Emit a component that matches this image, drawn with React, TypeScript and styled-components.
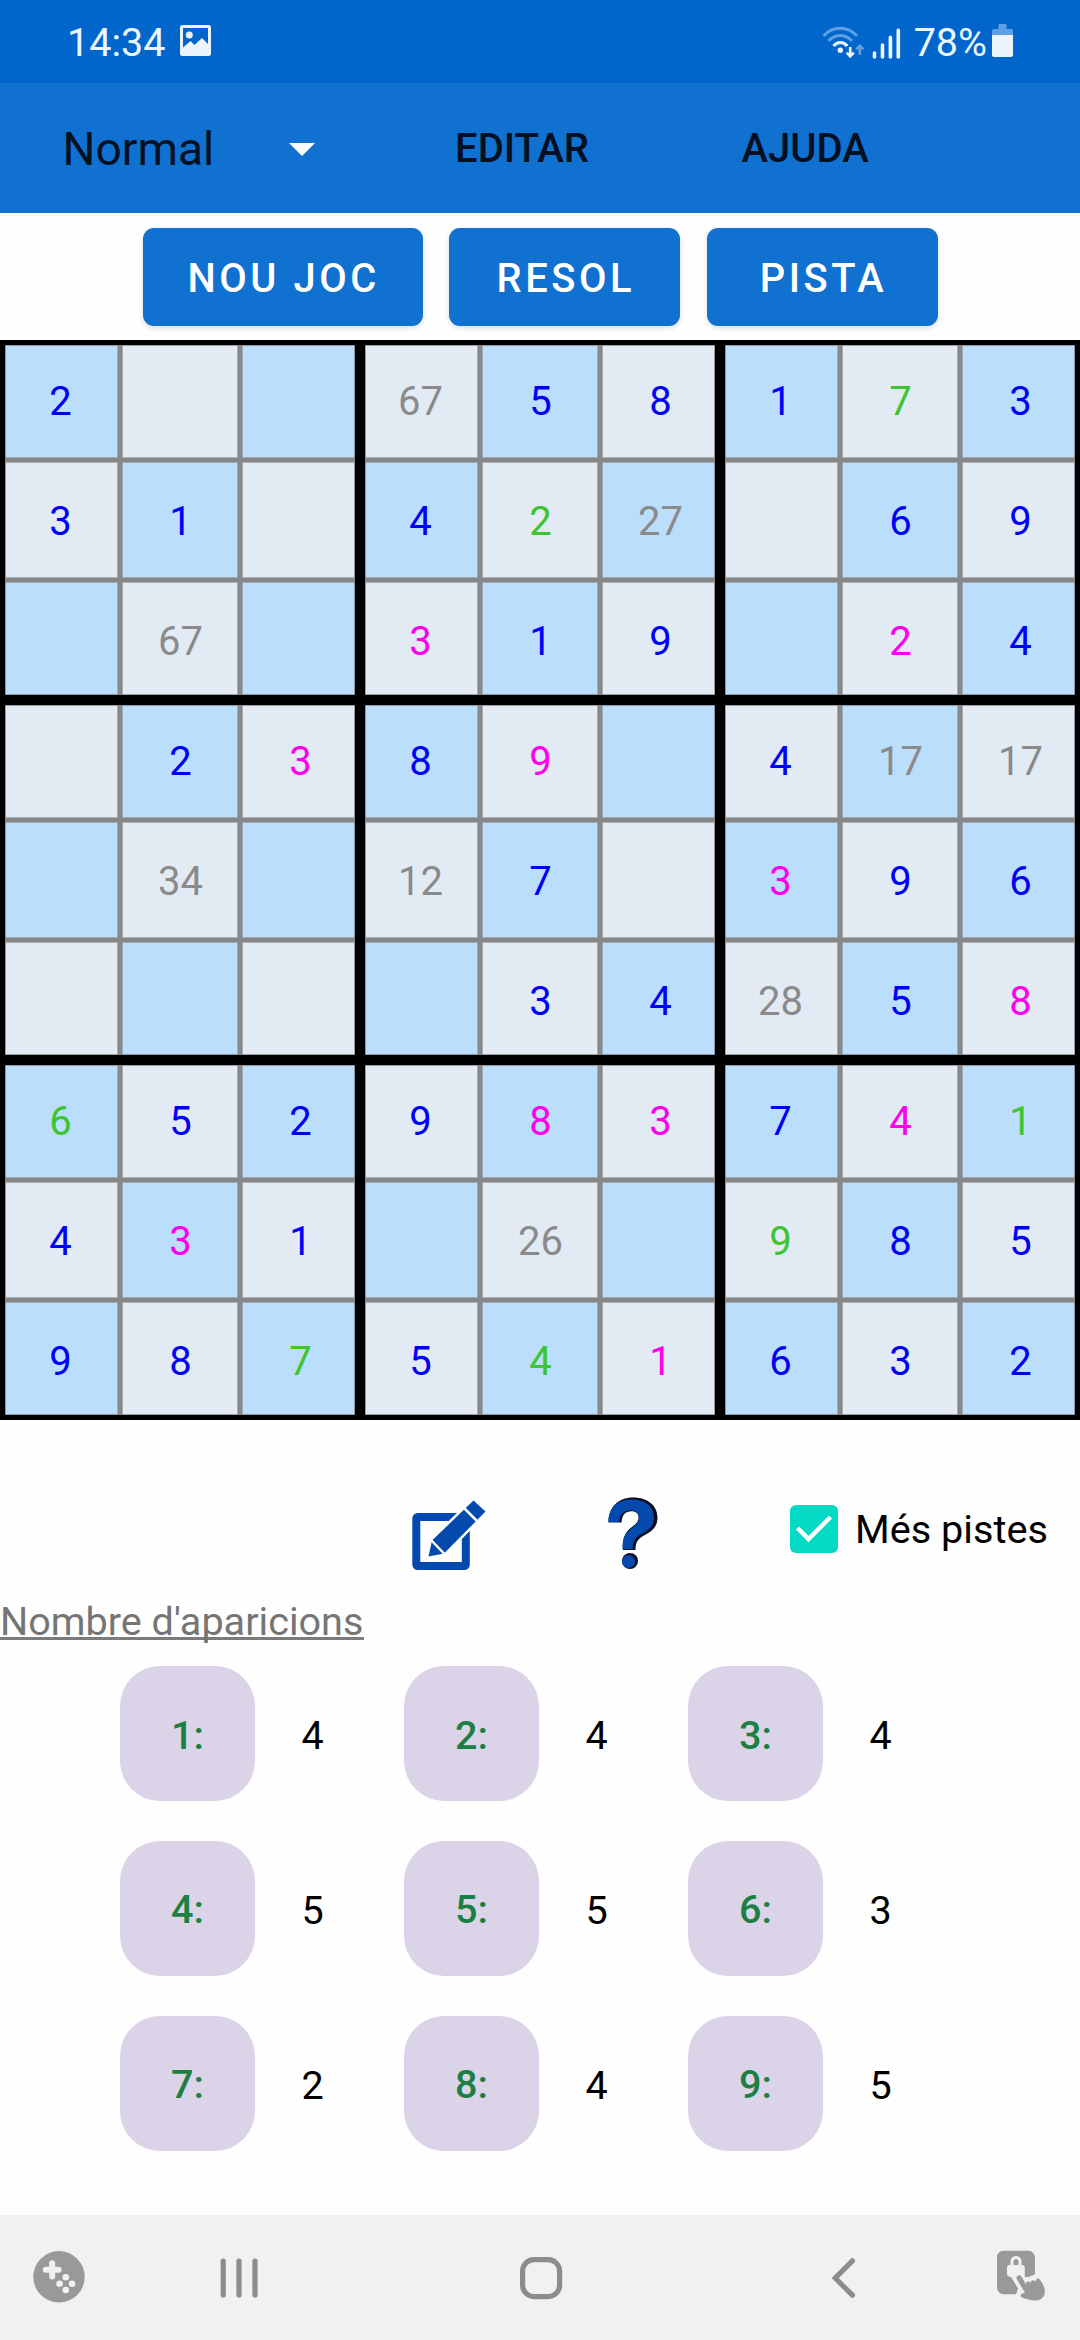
import React from 'react';
import styled, { createGlobalStyle } from 'styled-components';

const GlobalStyle = createGlobalStyle`
  * { box-sizing: border-box; }
  body { margin: 0; background: #fefefe; font-family: Roboto, "Noto Sans", sans-serif; }
  button { font-family: inherit; border: 0; padding: 0; background: none; }
`;

const Screen = styled.div`
  width: 1080px;
  height: 2340px;
  display: flex;
  flex-direction: column;
  background: #fefefe;
  font-size: 39.5px;
  line-height: 46px;
  overflow: hidden;
`;

const StatusBar = styled.header`
  height: 83px;
  padding: 2px 67px 0 67px;
  display: flex;
  justify-content: space-between;
  align-items: center;
  background: #0066cc;
  color: #ecf6ff;
`;

const StatusGroup = styled.div`
  display: flex;
  align-items: center;
`;

const StatusText = styled.span`
  white-space: nowrap;
`;

const BatteryText = styled(StatusText)`
  margin-left: 12px;
`;

const Toolbar = styled.nav`
  height: 130px;
  padding-top: 2px;
  display: flex;
  align-items: center;
  background: #1071d1;
  color: #03101f;
`;

const LevelSelect = styled.div`
  width: 315px;
  padding-left: 62.5px;
  display: flex;
  justify-content: space-between;
  align-items: center;
  font-size: 46.2px;
`;

const Caret = styled.i`
  border: 13px solid transparent;
  border-top-color: #fff;
  border-bottom: 0;
`;

const MenuItem = styled.button<{ $gap: number }>`
  margin-left: ${(p) => p.$gap}px;
  color: inherit;
  font-size: 40.1px;
  line-height: 46px;
  font-weight: 500;
`;

const Actions = styled.div`
  height: 127px;
  padding: 15px 0 0 142.5px;
  display: flex;
  gap: 26.6px;
  align-items: flex-start;
`;

const ActionButton = styled.button<{ $width: number }>`
  width: ${(p) => p.$width}px;
  height: 97.5px;
  padding: 3px 0 0 2px;
  border-radius: 11px;
  background: #1071d1;
  color: #fff;
  font-size: 39.9px;
  font-weight: 500;
  letter-spacing: 3.56px;
  box-shadow: 0 2px 5px rgba(0, 0, 0, 0.14);
`;

const Board = styled.main`
  display: grid;
  grid-template-columns: repeat(9, 120px);
  grid-auto-rows: 120px;
`;

// Rules are inset shadows so that the digits stay centred in equal 120px cells.
const rules = (row: number, col: number) => {
  const sides = [
    { x: 0, y: 1, thick: row % 3 === 0 },
    { x: 0, y: -1, thick: row % 3 === 2 },
    { x: 1, y: 0, thick: col % 3 === 0 },
    { x: -1, y: 0, thick: col % 3 === 2 },
  ];
  const line = (s: { x: number; y: number }, size: number, color: string) =>
    `inset ${s.x * size}px ${s.y * size}px 0 0 ${color}`;
  const black = sides.filter((s) => s.thick);
  const grey = sides.filter((s) => !s.thick);
  return [
    ...black.map((s) => line(s, 5, '#000')),
    ...grey.map((s) => line(s, 2, '#888')),
    ...black.map((s) => line(s, 6, 'rgba(110, 115, 120, 0.65)')),
    ...grey.map((s) => line(s, 3, 'rgba(136, 136, 136, 0.6)')),
  ].join(', ');
};

const Cell = styled.div<{ $row: number; $col: number; $ink: string }>`
  padding: 3px 0 0 1px;
  display: flex;
  align-items: center;
  justify-content: center;
  background: ${(p) => ((p.$row + p.$col) % 2 ? '#e2eaf4' : '#badefb')};
  color: ${(p) => p.$ink};
  font-size: 40px;
  box-shadow: ${(p) => rules(p.$row, p.$col)};
`;

const Tools = styled.section`
  height: 180px;
  padding: 78px 0 0 411px;
  display: flex;
  align-items: flex-start;
`;

const HelpIcon = styled.svg`
  margin: -1px 0 0 118px;
`;

const HintToggle = styled.label`
  margin: 7px 0 0 132px;
  display: flex;
  align-items: flex-start;
  gap: 17px;
  color: #000;
  font-size: 39.7px;
  line-height: 50px;
  white-space: nowrap;
`;

const Underlined = styled.h2`
  margin: 0;
  height: 66px;
  width: 364px;
  font-size: 39.6px;
  font-weight: 400;
  line-height: 43px;
  color: #757575;
  white-space: nowrap;
`;

const UnderlineText = styled.span`
  display: block;
  height: 40px;
  border-bottom: 3px solid #7b7b7b;
`;

const Counts = styled.section`
  padding-left: 120px;
  display: grid;
  grid-template-columns: repeat(3, 284px);
  grid-auto-rows: 174.75px;
`;

const Count = styled.div`
  display: flex;
  align-items: flex-start;
`;

const Chip = styled.button`
  width: 135px;
  height: 135px;
  padding-top: 3px;
  border-radius: 40px;
  background: #dbd4e8;
  color: #1c7f43;
  font-size: 39.6px;
  font-weight: 500;
`;

const CountValue = styled.span`
  width: 115px;
  line-height: 139px;
  text-align: center;
  color: #000;
`;

const NavBar = styled.footer`
  margin-top: auto;
  height: 125px;
  background: #f1f1f1;
`;

const inks: Record<string, string> = {
  b: '#0000f5',
  g: '#3cc52f',
  m: '#ff00ea',
  h: '#8a8a8a',
};

const rows = [
  '2b - - 67h 5b 8b 1b 7g 3b',
  '3b 1b - 4b 2g 27h - 6b 9b',
  '- 67h - 3m 1b 9b - 2m 4b',
  '- 2b 3m 8b 9m - 4b 17h 17h',
  '- 34h - 12h 7b - 3m 9b 6b',
  '- - - - 3b 4b 28h 5b 8m',
  '6g 5b 2b 9b 8m 3m 7b 4m 1g',
  '4b 3m 1b - 26h - 9g 8b 5b',
  '9b 8b 7g 5b 4g 1m 6b 3b 2b',
].map((row) => row.split(' '));

const counts = [4, 4, 4, 5, 5, 3, 2, 4, 5];

const Picture = styled.svg`
  margin: -5px 0 0 15px;
`;

const PictureIcon = () => (
  <Picture width="31" height="31" viewBox="0 0 31 31">
    <path
      fill="#ecf3fd"
      fillRule="evenodd"
      d="M2.500 0h26A2.500 2.500 0 0 1 31 2.500v26a2.500 2.500 0 0 1-2.500 2.500h-26A2.500 2.500 0 0 1 0 28.500v-26A2.500 2.500 0 0 1 2.500 0zM3 3v19.500L10.500 16l4 4L22 13l6 6V3z"
    />
    <circle cx="9.300" cy="10" r="3.500" fill="#ecf3fd" />
  </Picture>
);

const SignalIcons = () => (
  <svg width="80" height="36" viewBox="822 23 80 36" fill="none">
    <g stroke="#5fa0e2" strokeWidth="3">
      <path d="M823.500 34C833 23.800 847.500 23.800 857 34" />
      <path d="M828.500 39C835.500 31.800 845 31.800 852 39" />
    </g>
    <path d="M833.500 44C837.500 39.300 843.500 39.300 847.200 44" stroke="#ecf6ff" strokeWidth="3.200" />
    <circle cx="840.300" cy="48.300" r="2.700" fill="#ecf6ff" />
    <path d="M850.200 45V54M846.600 50.700L850.200 54.300L853.800 50.700" stroke="#ecf6ff" strokeWidth="2.600" />
    <path d="M859.800 53V44M856.200 47.300L859.800 43.700L863.400 47.300" stroke="#5fa0e2" strokeWidth="2.600" />
    <path
      d="M874.500 51V55M882.500 43V55M890.400 35.200V55M898.300 28.200V55"
      stroke="#ecf6ff"
      strokeWidth="3.600"
      strokeLinecap="round"
    />
  </svg>
);

const Battery = styled.svg`
  margin: -4px 0 0 5px;
`;

const BatteryIcon = () => (
  <Battery width="21" height="33" viewBox="0 0 21 33">
    <path fill="#5fa0e2" d="M6.500 0h8v5h4.500a2 2 0 0 1 2 2v5H0V7a2 2 0 0 1 2-2h4.500z" />
    <path fill="#ecf3fd" d="M0 11h21v20a2 2 0 0 1-2 2H2a2 2 0 0 1-2-2z" />
  </Battery>
);

const EditIcon = () => (
  <svg width="76" height="74" viewBox="411 1498 76 74">
    <rect x="416.300" y="1517" width="49.500" height="49" rx="1.500" fill="none" stroke="#0449ae" strokeWidth="8" />
    <path
      d="M428.500 1556.500L432 1540.500L473.500 1500.500L485.500 1511.500L444 1553.500Z"
      fill="#0449ae"
      stroke="#fefefe"
      strokeWidth="5"
      paintOrder="stroke"
      strokeLinejoin="round"
    />
    <path d="M431 1540L444.500 1554M464 1508L478 1522" stroke="#fefefe" strokeWidth="2.500" />
  </svg>
);

const QuestionIcon = () => (
  <HelpIcon width="53" height="74" viewBox="605 1497 53 74">
    <g fill="#0a0f20" transform="translate(1 -0.500)">
      <path d="M607.500 1523C607.500 1508 617 1498 632 1498C647 1498 656.500 1506.500 656.500 1518C656.500 1527 651.500 1531.500 643 1536C636.500 1539.500 634.500 1543 634.500 1550.500H622C621 1538 624.500 1532 631.500 1527C636 1523.800 637.500 1521.500 637.500 1518C637.500 1514 635 1511.800 630.500 1511.800C624.500 1511.800 621 1515.500 620.500 1523Z" />
      <circle cx="629" cy="1561.500" r="8" />
    </g>
    <g fill="#0449ae">
      <path d="M608.500 1522C608.500 1508 617.500 1499.500 631 1499.500C645 1499.500 654 1506.500 654 1517.500C654 1525.500 649.500 1530 641.500 1534C635 1537.500 632.500 1541.500 632.500 1549H622.500C622.500 1538.500 624.500 1533.500 631.500 1528.500C636.500 1525 639 1522.500 639 1518C639 1513 635.500 1510.300 630.500 1510.300C624 1510.300 620 1514.500 619 1522Z" />
      <circle cx="628.500" cy="1561.500" r="6.500" />
    </g>
  </HelpIcon>
);

const CheckIcon = () => (
  <svg width="48" height="48" viewBox="0 0 48 48">
    <rect width="48" height="48" rx="6" fill="#03dac5" />
    <path d="M7.500 23L18.500 34L40.500 12" fill="none" stroke="#fefefe" strokeWidth="4.500" />
  </svg>
);

const NavIcons = () => (
  <svg width="1080" height="125" viewBox="0 2215 1080 125" display="block">
    <circle cx="59" cy="2276.800" r="25.700" fill="#999" />
    <path d="M52.200 2263.200V2276.500M45.800 2269.800H58.600" stroke="#f1f1f1" strokeWidth="6" strokeLinecap="round" />
    <g fill="#f1f1f1">
      <circle cx="65.800" cy="2277.300" r="3.300" />
      <circle cx="59.600" cy="2283.700" r="3.300" />
      <circle cx="72" cy="2283.700" r="3.300" />
      <circle cx="65.800" cy="2290" r="3.300" />
    </g>
    <g stroke="#8c8c8c" strokeWidth="5.200" fill="none" strokeLinecap="round">
      <path d="M223.200 2261V2295M239 2261V2295M255 2261V2295" />
      <rect x="522.600" y="2259.600" width="37" height="37" rx="11.500" />
      <path d="M852.400 2260.800L835.300 2278L852.400 2295.200" />
    </g>
    <path
      fill="#999"
      d="M1003.500 2250.700H1028.500A6.500 6.500 0 0 1 1034.900 2257.200V2274.500L1027 2277.500L1018 2288.500L1016 2294.200H1003.500A6.500 6.500 0 0 1 997 2287.700V2257.200A6.500 6.500 0 0 1 1003.500 2250.700Z"
    />
    <path d="M1012 2265.500V2261.500A4 4 0 0 1 1020 2261.500V2265.500" fill="none" stroke="#f1f1f1" strokeWidth="3" />
    <path
      d="M1009 2265H1022.500Q1024.800 2265 1024.800 2267.500V2277H1035L1030 2291L1019 2290L1011 2277Q1007 2276.500 1007 2274V2267.500Q1007 2265 1009 2265Z"
      fill="#f1f1f1"
    />
    <path
      fill="#999"
      d="M1016.500 2278.500C1016 2275 1020.500 2274.300 1021.800 2277L1026 2284.500C1025.300 2281.500 1028.500 2280.500 1030.500 2283C1030.500 2280 1033.500 2279.300 1035.500 2281.500C1036 2277.800 1039 2277.300 1040.500 2280.500C1044.300 2285.500 1046.500 2292 1043.500 2296.500C1040 2302 1031.500 2301 1022 2297.500C1019.500 2296 1020.800 2293 1023.500 2293.200L1025 2293Z"
    />
  </svg>
);

export default function App() {
  return (
    <Screen>
      <GlobalStyle />
      <StatusBar>
        <StatusGroup>
          <StatusText>14:34</StatusText>
          <PictureIcon />
        </StatusGroup>
        <StatusGroup>
          <SignalIcons />
          <BatteryText>78%</BatteryText>
          <BatteryIcon />
        </StatusGroup>
      </StatusBar>
      <Toolbar>
        <LevelSelect>
          Normal
          <Caret />
        </LevelSelect>
        <MenuItem $gap={140}>EDITAR</MenuItem>
        <MenuItem $gap={152.5}>AJUDA</MenuItem>
      </Toolbar>
      <Actions>
        <ActionButton $width={280.3}>NOU JOC</ActionButton>
        <ActionButton $width={231}>RESOL</ActionButton>
        <ActionButton $width={231}>PISTA</ActionButton>
      </Actions>
      <Board>
        {rows.map((row, r) =>
          row.map((value, c) => {
            const empty = value === '-';
            return (
              <Cell key={`${r}-${c}`} $row={r} $col={c} $ink={empty ? 'inherit' : inks[value.slice(-1)]}>
                {empty ? null : value.slice(0, -1)}
              </Cell>
            );
          }),
        )}
      </Board>
      <Tools>
        <EditIcon />
        <QuestionIcon />
        <HintToggle>
          <CheckIcon />
          Més pistes
        </HintToggle>
      </Tools>
      <Underlined>
        <UnderlineText>Nombre d'aparicions</UnderlineText>
      </Underlined>
      <Counts>
        {counts.map((count, i) => (
          <Count key={i}>
            <Chip>{i + 1}:</Chip>
            <CountValue>{count}</CountValue>
          </Count>
        ))}
      </Counts>
      <NavBar>
        <NavIcons />
      </NavBar>
    </Screen>
  );
}
